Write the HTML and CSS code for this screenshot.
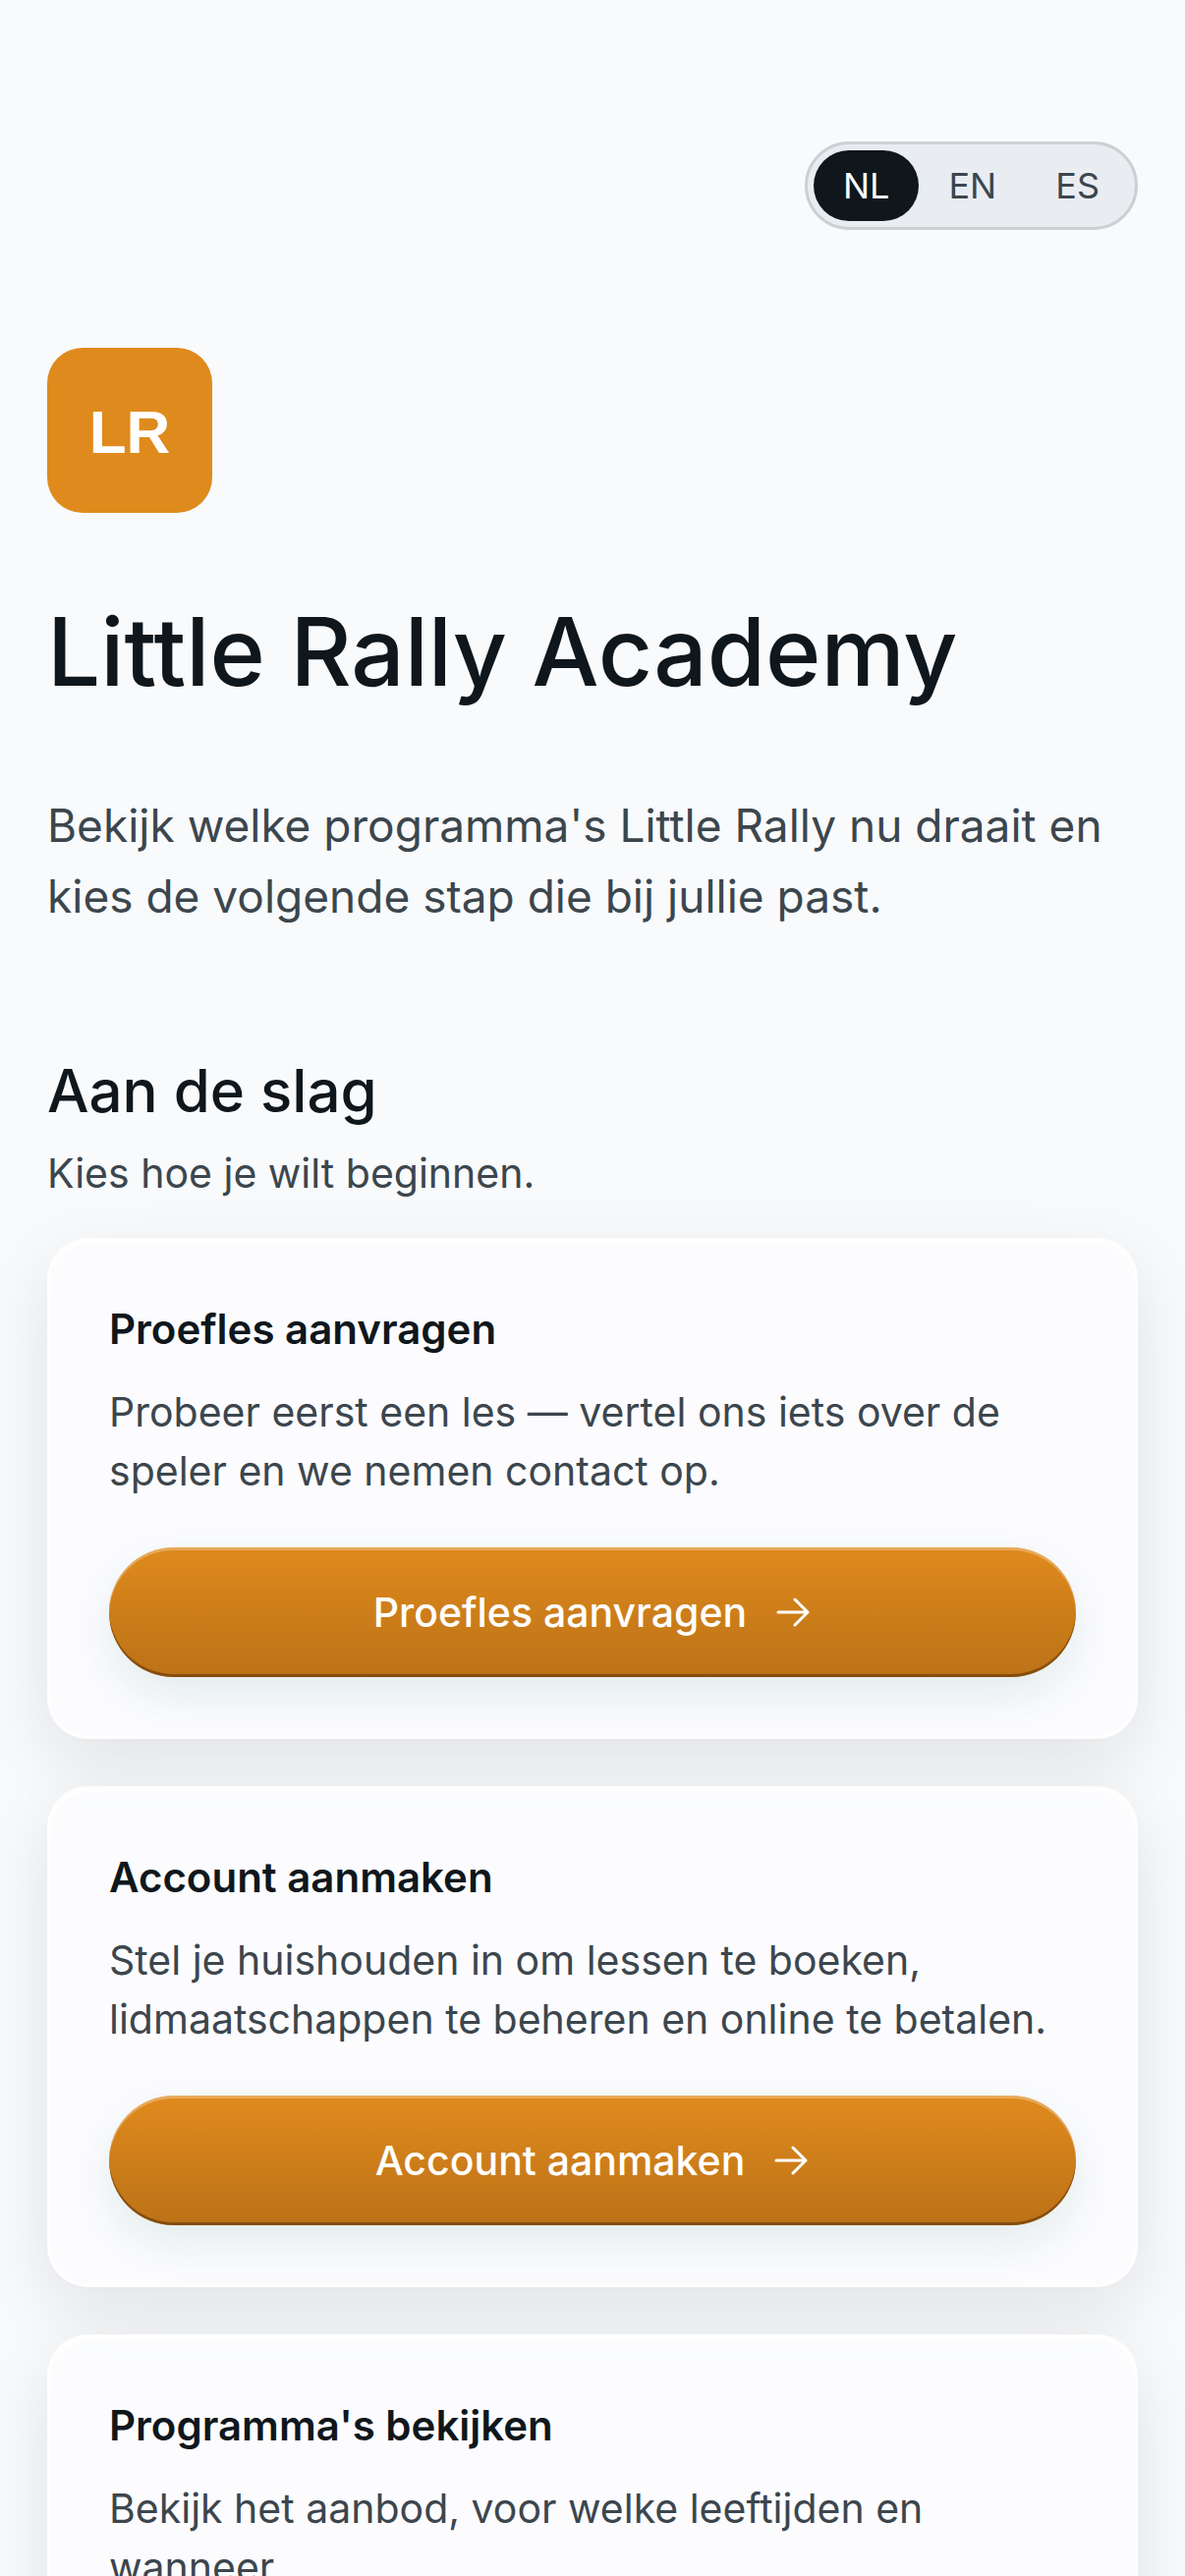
FILE: index.html
```html
<!DOCTYPE html>
<html lang="nl">
<head>
  <meta charset="utf-8">
  <meta name="viewport" content="width=device-width, initial-scale=1">
  <title>Little Rally Academy</title>
  <link rel="stylesheet" href="styles.css">
</head>
<body>
  <header class="topbar">
    <div class="lang-switch">
      <button class="lang active">NL</button>
      <button class="lang">EN</button>
      <button class="lang">ES</button>
    </div>
  </header>

  <main>
    <div class="logo">LR</div>
    <h1>Little Rally Academy</h1>
    <p class="lead">Bekijk welke programma's Little Rally nu draait en kies de volgende stap die bij jullie past.</p>

    <section>
      <h2>Aan de slag</h2>
      <p class="intro">Kies hoe je wilt beginnen.</p>

      <div class="cards">
        <article class="card">
          <h3>Proefles aanvragen</h3>
          <p>Probeer eerst een les — vertel ons iets over de speler en we nemen contact op.</p>
          <a class="cta" href="#">Proefles aanvragen
            <svg class="arrow" viewBox="0 0 36 30"><path d="M2 15h30M19 2l13 13-13 13"/></svg>
          </a>
        </article>

        <article class="card">
          <h3>Account aanmaken</h3>
          <p>Stel je huishouden in om lessen te boeken, lidmaatschappen te beheren en online te betalen.</p>
          <a class="cta" href="#">Account aanmaken
            <svg class="arrow" viewBox="0 0 36 30"><path d="M2 15h30M19 2l13 13-13 13"/></svg>
          </a>
        </article>

        <article class="card">
          <h3>Programma's bekijken</h3>
          <p>Bekijk het aanbod, voor welke leeftijden en wanneer.</p>
        </article>
      </div>
    </section>
  </main>
</body>
</html>
```

FILE: styles.css
```css
* {
  box-sizing: border-box;
}

body {
  margin: 0;
  padding: 144px 48px 0;
  background-color: #f8fafc;
  color: #0f171c;
  font-family: Inter, sans-serif;
  font-size: 41px;
  line-height: 60px;
}

h1, h2, h3, p {
  margin: 0;
}

.topbar {
  display: flex;
  justify-content: flex-end;
  margin-bottom: 120px;
}

.lang-switch {
  display: flex;
  padding: 6px;
  border: 3px solid #cdd0d3;
  border-radius: 45px;
  background-color: #e9edf2;
}

.lang {
  height: 72px;
  padding: 0 30px;
  border: 0;
  border-radius: 36px;
  background: none;
  color: #3c464d;
  font-family: inherit;
  font-size: 36px;
  font-weight: 400;
  cursor: pointer;
}

.lang.active {
  background-color: #0f171c;
  color: #f8fafc;
}

.logo {
  display: flex;
  align-items: center;
  justify-content: center;
  width: 168px;
  height: 168px;
  margin-bottom: 87px;
  padding-top: 4px;
  border-radius: 36px;
  background-color: #df8a1d;
  color: white;
  font-family: "Liberation Sans", sans-serif;
  font-size: 62px;
  font-weight: bold;
}

h1 {
  margin-bottom: 87px;
  font-size: 96px;
  font-weight: 500;
  line-height: 108px;
}

.lead {
  margin-bottom: 120px;
  color: #3c464d;
  font-size: 46px;
  line-height: 72px;
}

h2 {
  margin-bottom: 12px;
  font-size: 60px;
  font-weight: 500;
  line-height: 84px;
}

.intro {
  margin-bottom: 36px;
  color: #3c464d;
}

.cards {
  display: flex;
  flex-direction: column;
  gap: 48px;
}

.card {
  padding: 60px;
  border: 3px solid rgba(255, 255, 255, 0.7);
  border-radius: 42px;
  background-color: rgba(252, 253, 255, 0.8);
  box-shadow: inset 0 3px 0 rgba(255, 255, 255, 0.7), 0 24px 72px rgba(15, 23, 28, 0.1);
}

.card h3 {
  margin-bottom: 24px;
  font-size: 42px;
  font-weight: 600;
}

.card p {
  margin-bottom: 48px;
  color: #3c464d;
}

.cta {
  display: flex;
  align-items: center;
  justify-content: center;
  gap: 30px;
  height: 132px;
  border-radius: 66px;
  background: linear-gradient(#df8a1d, #bc7217);
  box-shadow: inset 0 3px 0 rgba(255, 255, 255, 0.28), inset 0 -3px 0 rgba(80, 40, 0, 0.5), 0 18px 48px rgba(22, 101, 70, 0.11);
  color: white;
  font-weight: 500;
  text-decoration: none;
}

.arrow {
  width: 36px;
  height: 30px;
  fill: none;
  stroke: currentColor;
  stroke-width: 3;
  stroke-linecap: round;
  stroke-linejoin: round;
}
```
